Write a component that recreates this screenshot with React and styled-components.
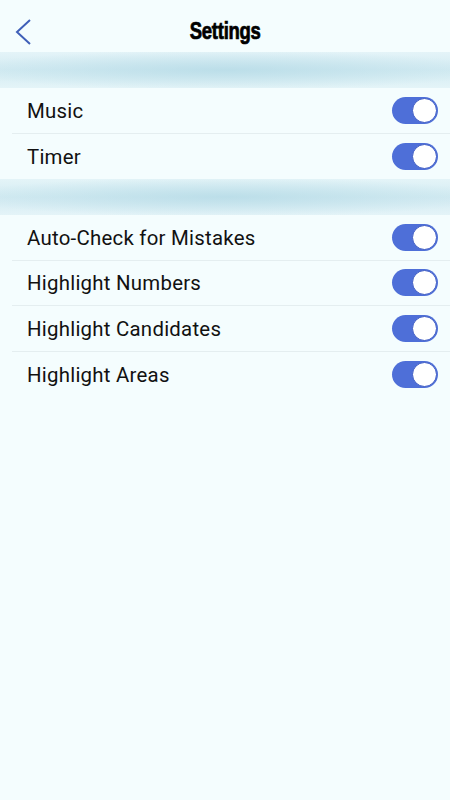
import React, { useState } from "react";
import styled, { createGlobalStyle } from "styled-components";

const GlobalStyle = createGlobalStyle`
  html, body {
    margin: 0;
    padding: 0;
    background: #f4fdfe;
  }
  body {
    font-family: Roboto, "Liberation Sans", sans-serif;
  }
`;

const Page = styled.div`
  width: 450px;
  min-height: 800px;
  background: #f4fdfe;
  color: #111;
`;

const Header = styled.div`
  height: 52px;
  display: flex;
  align-items: center;
  justify-content: center;
  position: relative;
`;

const BackButton = styled.button`
  position: absolute;
  left: 10px;
  top: 15px;
  width: 28px;
  height: 34px;
  padding: 0;
  border: none;
  background: none;
  display: flex;
  align-items: center;
  justify-content: center;
`;

const Title = styled.h1`
  margin: 0;
  padding-top: 9px;
  font-family: "Liberation Sans", Arial, sans-serif;
  font-weight: 700;
  font-size: 22px;
  letter-spacing: -0.3px;
  transform: scaleX(0.84) scaleY(1.05);
  -webkit-text-stroke: 0.7px #000;
  color: #000;
`;

const Band = styled.div`
  height: 36px;
  background:
    radial-gradient(ellipse 60% 55% at 50% 50%, rgba(180, 218, 230, 0.75), rgba(200, 230, 238, 0) 100%),
    linear-gradient(to bottom, #e4f4f8 0%, #d3ebf2 50%, #e4f4f8 100%);
`;

const List = styled.div`
  display: flex;
  flex-direction: column;
`;

const Row = styled.div`
  height: 45.5px;
  display: flex;
  align-items: center;
  justify-content: space-between;
  margin-left: 12px;
  padding: 0 12px 0 15px;
  border-bottom: ${(p) => (p.last ? "none" : "1px solid #e4eef0")};
  box-sizing: border-box;
`;

const Label = styled.span`
  font-size: 20.4px;
  letter-spacing: 0.25px;
  padding-top: 1px;
  color: #111;
`;

const Track = styled.button`
  width: 46px;
  height: 27px;
  border-radius: 14px;
  border: none;
  padding: 0;
  background: ${(p) => (p.on ? "#4e6fd8" : "#d7dde2")};
  display: flex;
  align-items: center;
  justify-content: ${(p) => (p.on ? "flex-end" : "flex-start")};
  cursor: pointer;
`;

const Knob = styled.span`
  width: 25px;
  height: 25px;
  border-radius: 50%;
  background: #fff;
  box-sizing: border-box;
  border: 1px solid #3d5bc4;
  margin: 0 1px;
`;

function Toggle({ on, onChange }) {
  return (
    <Track on={on} onClick={() => onChange(!on)}>
      <Knob />
    </Track>
  );
}

const groups = [
  ["Music", "Timer"],
  ["Auto-Check for Mistakes", "Highlight Numbers", "Highlight Candidates", "Highlight Areas"],
];

export default function App() {
  const [state, setState] = useState({});
  const isOn = (k) => state[k] !== false;

  return (
    <Page>
      <GlobalStyle />
      <Header>
        <BackButton aria-label="Back">
          <svg width="20" height="28" viewBox="0 0 20 28">
            <polyline
              points="16,2 3,14 16,26"
              fill="none"
              stroke="#3f5fb8"
              strokeWidth="2"
            />
          </svg>
        </BackButton>
        <Title>Settings</Title>
      </Header>
      {groups.map((items, gi) => (
        <React.Fragment key={gi}>
          <Band />
          <List>
            {items.map((name, i) => (
              <Row key={name} last={i === items.length - 1}>
                <Label>{name}</Label>
                <Toggle
                  on={isOn(name)}
                  onChange={(v) => setState((s) => ({ ...s, [name]: v }))}
                />
              </Row>
            ))}
          </List>
        </React.Fragment>
      ))}
    </Page>
  );
}
